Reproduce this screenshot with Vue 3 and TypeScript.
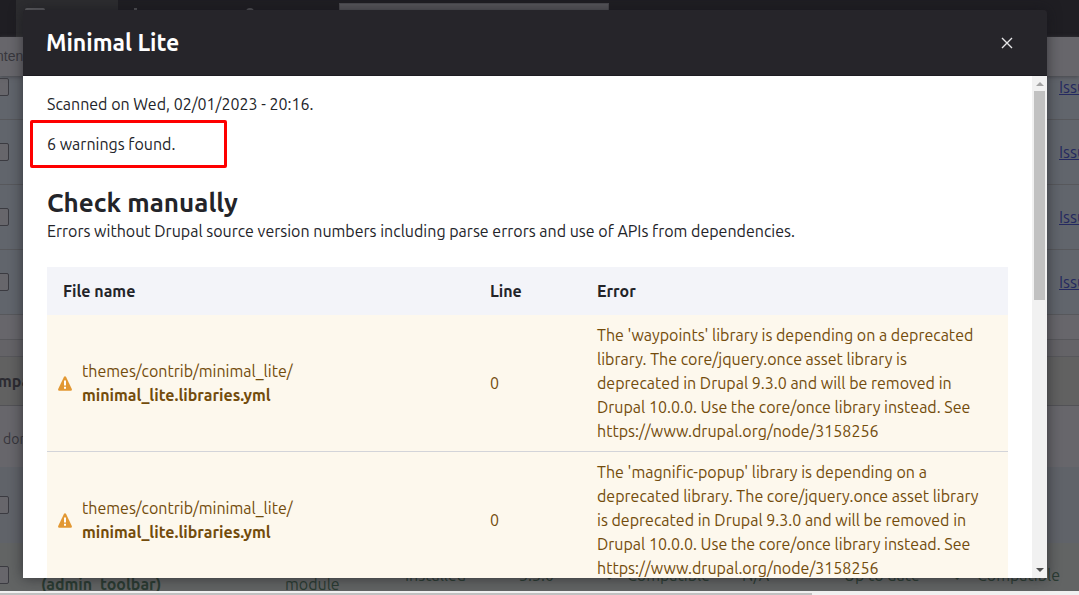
<script setup lang="ts">
interface Warning {
  id: number
  dir: string
  file: string
  line: number
  message: string
}

const warnings: Warning[] = ['waypoints', 'magnific-popup'].map((library, index) => ({
  id: index,
  dir: 'themes/contrib/minimal_lite/',
  file: 'minimal_lite.libraries.yml',
  line: 0,
  message: `The '${library}' library is depending on a deprecated library. The core/jquery.once asset library is deprecated in Drupal 9.3.0 and will be removed in Drupal 10.0.0. Use the core/once library instead. See https://www.drupal.org/node/3158256`,
}))

const projectRows: number[] = [1, 2, 3, 4]
</script>

<template>
  <div class="screen">
    <div class="page">
      <div class="toolbar">
        <span class="tab"><i class="tab-icon"></i></span>
        <i class="dot"></i>
        <i class="ring"></i>
        <span class="banner"></span>
      </div>
      <div class="crumbs">ntent</div>
      <div v-for="row in projectRows" :key="row" class="project">
        <input type="checkbox" :aria-label="`Select project ${row}`" />
        <a href="#">Issues</a>
      </div>
      <div class="card-end"></div>
      <div class="gap"></div>
      <div class="group-head">mpatible</div>
      <div class="group-note">done</div>
      <div class="plain"><input type="checkbox" aria-label="Select module" /></div>
      <div class="module">
        <input type="checkbox" aria-label="Select admin_toolbar" />
        <b class="low">(admin_toolbar)</b>
        <span class="low">module</span>
        <span>Installed</span>
        <span>3.3.0</span>
        <span>✓</span>
        <span>Compatible</span>
        <span>N/A</span>
        <span>Up to date</span>
        <span>✓</span>
        <span>Compatible</span>
      </div>
      <div class="hscroll"><i></i></div>
    </div>

    <section class="dialog" role="dialog" aria-labelledby="dialog-title">
      <header class="titlebar">
        <h1 id="dialog-title">Minimal Lite</h1>
        <button type="button" aria-label="Close">
          <svg width="12" height="12" viewBox="0 0 12 12" aria-hidden="true">
            <path d="M1 1 L11 11 M11 1 L1 11" fill="none" stroke="#e6e6e8" stroke-width="1.4" />
          </svg>
        </button>
      </header>
      <div class="body">
        <div class="content">
          <p class="scanned">Scanned on Wed, 02/01/2023 - 20:16.</p>
          <p class="found">6 warnings found.</p>
          <h2>Check manually</h2>
          <p class="note">Errors without Drupal source version numbers including parse errors and use of APIs from dependencies.</p>
          <table>
            <colgroup>
              <col class="c-file" />
              <col class="c-line" />
              <col />
            </colgroup>
            <thead>
              <tr>
                <th scope="col">File name</th>
                <th scope="col">Line</th>
                <th scope="col">Error</th>
              </tr>
            </thead>
            <tbody>
              <tr v-for="warning in warnings" :key="warning.id">
                <td class="file">
                  <div class="file-box">
                    <svg width="14" height="15" viewBox="0 0 14 15" aria-hidden="true">
                      <path d="M7 0.3 Q7.7 0.3 8.1 1.1 L13.8 12.9 Q14.3 14.6 12.8 14.7 H1.2 Q-0.3 14.6 0.2 12.9 L5.9 1.1 Q6.3 0.3 7 0.3 Z" fill="#e29833" />
                      <path d="M6 4.4 H8 V9.4 H6 Z M6 10.7 H8 V12.7 H6 Z" fill="#fff" />
                    </svg>
                    <span>{{ warning.dir }}<br /><b>{{ warning.file }}</b></span>
                  </div>
                </td>
                <td>{{ warning.line }}</td>
                <td>{{ warning.message }}</td>
              </tr>
            </tbody>
          </table>
        </div>
        <div class="vscroll">
          <i class="up"></i>
          <i class="thumb"></i>
          <i class="down"></i>
        </div>
      </div>
    </section>
  </div>
</template>

<style>
html,
body,
#app {
  height: 100%;
  margin: 0;
}
</style>

<style scoped>
* {
  box-sizing: border-box;
}

.screen {
  position: relative;
  height: 100%;
  overflow: hidden;
  font-family: Ubuntu, "Noto Sans", sans-serif;
  font-size: 16px;
  font-variant-ligatures: none;
  text-rendering: optimizeSpeed;
  line-height: 24px;
  color: #232429;
}

.page {
  display: flex;
  flex-direction: column;
  height: 100%;
  background: #67666b;
}

.page > * {
  flex: none;
}

.toolbar {
  display: flex;
  height: 37px;
  padding-left: 16px;
  background: #1f1e23;
}

.tab {
  width: 102px;
  padding: 8px 0 0 9px;
  background: #2d2d30;
}

.tab-icon {
  display: block;
  width: 20px;
  height: 12px;
  border-radius: 2px;
  background: #626266;
}

.dot {
  width: 3px;
  height: 4px;
  margin: 8px 0 0 16px;
  background: #55555a;
}

.ring {
  width: 8px;
  height: 8px;
  margin: 8px 0 0 109px;
  border: 2px solid #55555a;
  border-radius: 4px;
}

.banner {
  width: 270px;
  height: 24px;
  margin: 3px 0 0 85px;
  border: 1px solid #4b4a4f;
  background: #59585d;
}

.crumbs {
  height: 39px;
  padding-top: 7px;
  font: 14px/24px "Liberation Sans", sans-serif;
  text-indent: -4px;
  color: #38373d;
  background: #67666b;
  box-shadow: 0 1px 4px #47474c;
  z-index: 1;
}

.project {
  display: flex;
  align-items: center;
  justify-content: space-between;
  height: 65px;
  padding-bottom: 1px;
  border-bottom: 1px solid #57585c;
  background: #61656c;
}

.crumbs + .project {
  height: 44px;
  padding-bottom: 22px;
}

input {
  appearance: none;
  flex: none;
  width: 19px;
  height: 18px;
  margin: 0 0 0 -10px;
  border: 1px solid #3b3b41;
  border-radius: 2px;
  background: #67666b;
}

.project a {
  width: 20px;
  white-space: nowrap;
  color: #252a60;
}

.card-end {
  height: 25px;
  border-bottom: 1px solid #57575b;
}

.gap {
  height: 17px;
  border-bottom: 1px solid #57575b;
  background: #646367;
}

.group-head {
  height: 49px;
  padding-top: 12px;
  border-bottom: 1px solid #525256;
  font-weight: 700;
  text-indent: -2px;
  color: #2c2b31;
  background: #616161;
}

.group-note {
  height: 61px;
  padding: 21px 0 0 3px;
  font-size: 14px;
  color: #36353b;
}

.plain {
  display: flex;
  align-items: center;
  height: 76px;
  padding-bottom: 1px;
  background: #606369;
}

.module {
  display: grid;
  grid-template-columns: 41px 244px 120px 114px 86px 22px 115px 102px 109px 24px 1fr;
  height: 48px;
  padding-top: 20px;
  overflow: hidden;
  white-space: nowrap;
  color: #2a3b32;
  background: #626464;
}

.module input {
  margin-top: 3px;
}

.low {
  padding-top: 9px;
}

.hscroll {
  height: 5px;
  padding-top: 2px;
  background: #f1f1f1;
}

.hscroll i {
  display: block;
  width: 75.3%;
  height: 3px;
  background: #c1c1c1;
}

.dialog {
  position: absolute;
  z-index: 2;
  inset: 10px 32px 17px 23px;
  display: flex;
  flex-direction: column;
  border-radius: 4px 4px 0 0;
  background: #26252a;
  box-shadow: 0 0 14px rgba(20, 20, 25, 0.6);
}

.titlebar {
  display: flex;
  flex: none;
  align-items: center;
  justify-content: space-between;
  height: 66px;
  padding: 0 24px 0 23px;
  border-bottom: 1px solid #1d1c22;
  border-radius: 4px 4px 0 0;
  color: #fff;
  background: #26252a;
}

h1 {
  margin: 0;
  font-size: 23px;
  line-height: 28px;
}

button {
  display: grid;
  place-items: center;
  width: 32px;
  height: 32px;
  padding: 0;
  border: 0;
  background: none;
}

.body {
  display: flex;
  flex: 1;
  min-height: 0;
  background: #fff;
}

.content {
  flex: 1;
  min-width: 0;
  padding: 16px 24px 0;
  overflow: hidden;
}

p {
  margin: 0;
}

.found {
  width: 197px;
  height: 48px;
  margin: 4px 0 0 -17px;
  padding: 9px 14px;
  border: 3px solid #fe0000;
  border-radius: 2px;
}

h2 {
  margin: 19px 0 0;
  font-size: 26px;
  line-height: 32px;
}

table {
  width: 100%;
  margin-top: 24px;
  border-collapse: collapse;
  table-layout: fixed;
}

.c-file {
  width: 427px;
}

.c-line {
  width: 107px;
}

th {
  height: 48px;
  padding: 0 16px;
  text-align: left;
  background: #f3f4f9;
}

td {
  padding: 8px 16px;
  border-bottom: 1px solid #d3d4d9;
  color: #734c0c;
  background: #fdf8ed;
}

.file {
  padding-left: 11px;
}

.file-box {
  display: flex;
  gap: 10px;
  align-items: center;
}

.vscroll {
  display: flex;
  flex: none;
  flex-direction: column;
  align-items: center;
  width: 15px;
  padding: 6px 0;
  background: #f1f1f1;
}

.up,
.down {
  border: 4px solid transparent;
}

.up {
  border-top: 0;
  border-bottom-color: #a3a3a3;
}

.thumb {
  width: 11px;
  height: 209px;
  margin: 5px 0 auto;
  background: #c1c1c1;
}

.down {
  border-bottom: 0;
  border-top-color: #505050;
}
</style>
